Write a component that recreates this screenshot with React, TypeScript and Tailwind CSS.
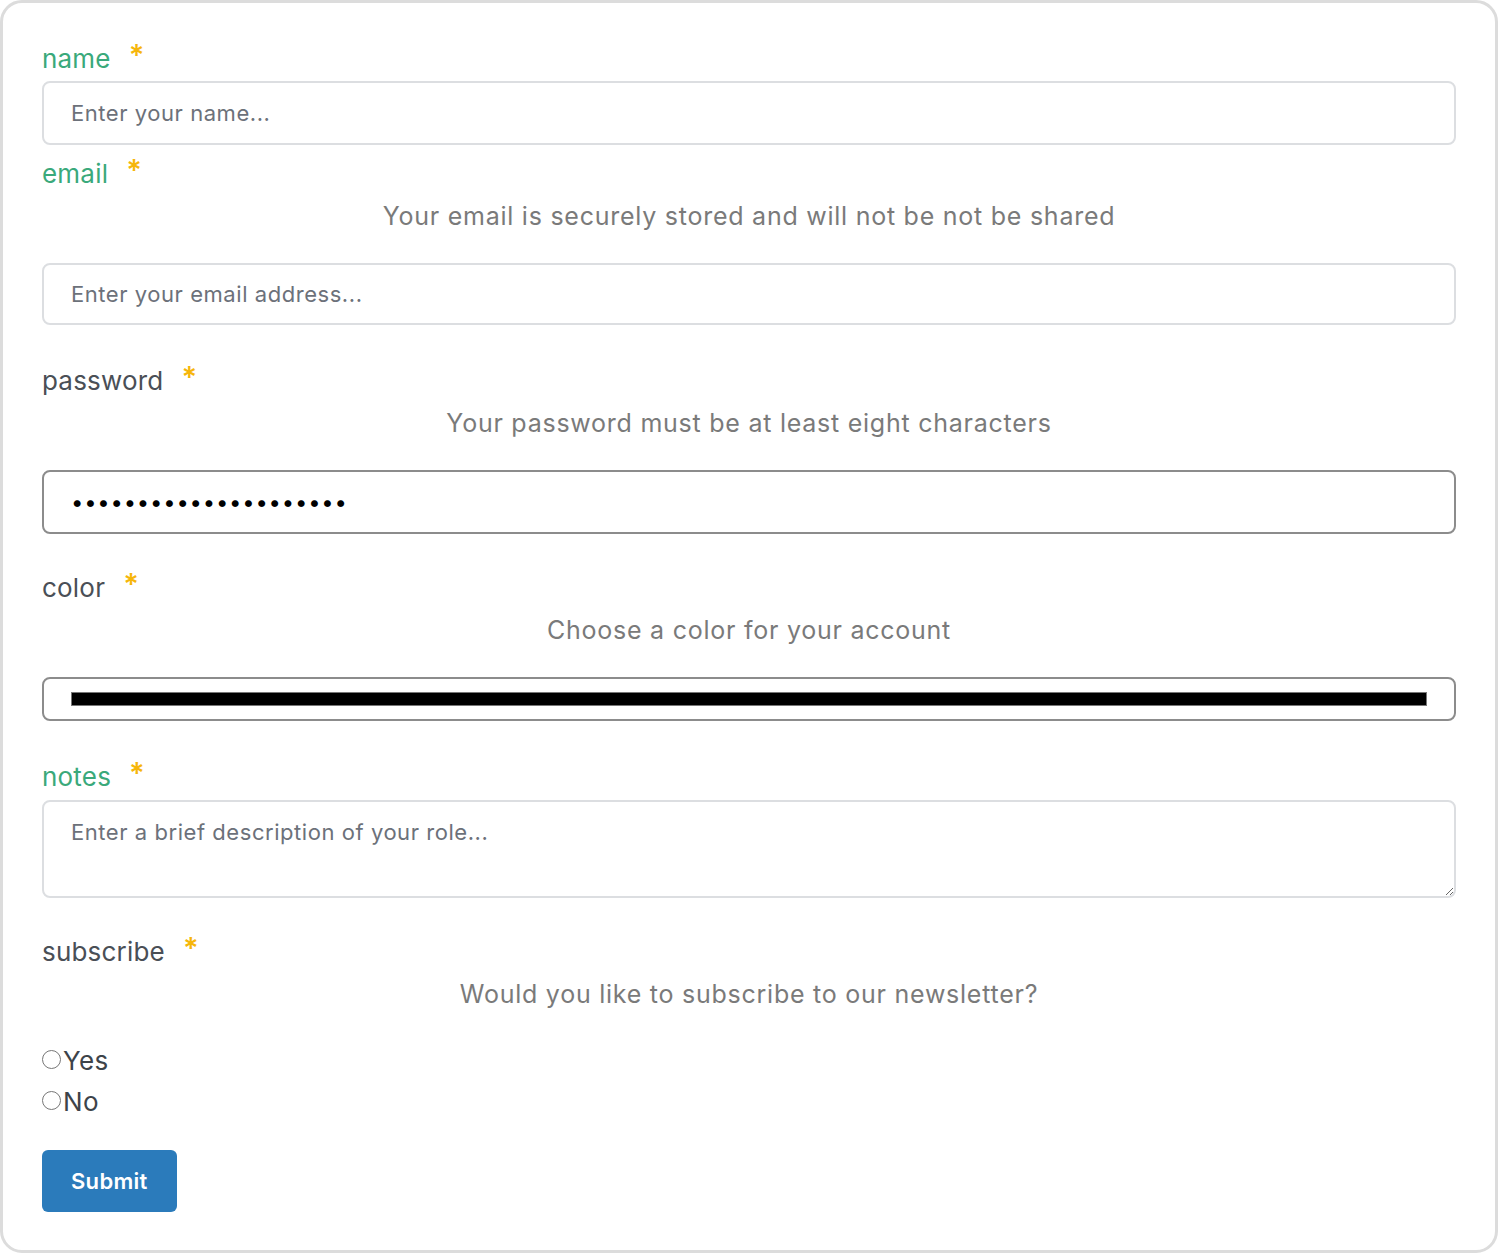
import { useState } from 'react';

const FONT = { fontFamily: 'Inter, "Noto Sans", sans-serif' };

function FieldLabel({ text, valid, className }: { text: string; valid: boolean; className?: string }) {
  return (
    <div className={`flex items-start h-[32px] ${className ?? ''}`}>
      <label
        className={`text-[26px] leading-[32px] tracking-[0.2px] ${valid ? 'text-[#3aa97b]' : 'text-[#4a4f56]'}`}
      >
        {text}
      </label>
      <span className="ml-[18px] text-[29px] font-semibold leading-[24px] text-[#f6b60b]">*</span>
    </div>
  );
}

function Helper({ text }: { text: string }) {
  return (
    <p className="mt-[10px] text-center text-[25px] leading-[32px] tracking-[0.75px] text-[#7a7a7a]">
      {text}
    </p>
  );
}

export default function App() {
  const [subscribe, setSubscribe] = useState<string>('');

  const inputLight =
    'block w-full rounded-[8px] border-2 border-[#dcdee1] bg-white px-[27px] text-[22px] tracking-[0.55px] text-[#3d4349] placeholder:text-[#6c717a] outline-none';

  return (
    <div className="bg-white" style={FONT}>
      <div className="h-[1253px] w-[1498px] rounded-[22px] border-[3px] border-[#dcdcdc] bg-white px-[39px] pt-[40px]">
        <form onSubmit={(e) => e.preventDefault()}>
          {/* name */}
          <FieldLabel text="name" valid />
          <input className={`${inputLight} mt-[6px] h-[64px]`} placeholder="Enter your name..." />

          {/* email */}
          <FieldLabel text="email" valid className="mt-[13px]" />
          <Helper text="Your email is securely stored and will not be not be shared" />
          <input className={`${inputLight} mt-[31px] h-[62px]`} placeholder="Enter your email address..." />

          {/* password */}
          <FieldLabel text="password" valid={false} className="mt-[40px]" />
          <Helper text="Your password must be at least eight characters" />
          <input
            type="password"
            defaultValue="passwordpassword12345"
            className="mt-[31px] block h-[64px] w-full rounded-[8px] border-2 border-[#8c8c8c] bg-white px-[27px] text-[22px] tracking-[0.8px] text-black outline-none"
          />

          {/* color */}
          <FieldLabel text="color" valid={false} className="mt-[38px]" />
          <Helper text="Choose a color for your account" />
          <div className="mt-[31px] flex h-[44px] w-full items-center rounded-[8px] border-2 border-[#8c8c8c] bg-white px-[27px]">
            <div className="h-[14px] w-full border border-[#777] bg-black" />
          </div>

          {/* notes */}
          <FieldLabel text="notes" valid className="mt-[40px]" />
          <textarea
            className={`${inputLight} mt-[7px] h-[98px] pt-[14px] leading-[33px]`}
            placeholder="Enter a brief description of your role..."
          />

          {/* subscribe */}
          <FieldLabel text="subscribe" valid={false} className="mt-[38px]" />
          <Helper text="Would you like to subscribe to our newsletter?" />
          <div className="mt-[35px] flex flex-col gap-[9px]">
            {['Yes', 'No'].map((opt) => (
              <label
                key={opt}
                className="flex h-[32px] items-center text-[26px] leading-[32px] tracking-[0.3px] text-[#3d4349]"
              >
                <input
                  type="radio"
                  name="subscribe"
                  value={opt}
                  checked={subscribe === opt}
                  onChange={() => setSubscribe(opt)}
                  className="m-0 mr-[2px] h-[19px] w-[19px] -translate-y-[2px]"
                />
                {opt}
              </label>
            ))}
          </div>

          <button
            type="submit"
            className="mt-[32px] h-[62px] rounded-[6px] bg-[#2b7bbb] px-[29px] text-[22px] font-semibold tracking-[0.3px] text-white"
          >
            Submit
          </button>
        </form>
      </div>
    </div>
  );
}
